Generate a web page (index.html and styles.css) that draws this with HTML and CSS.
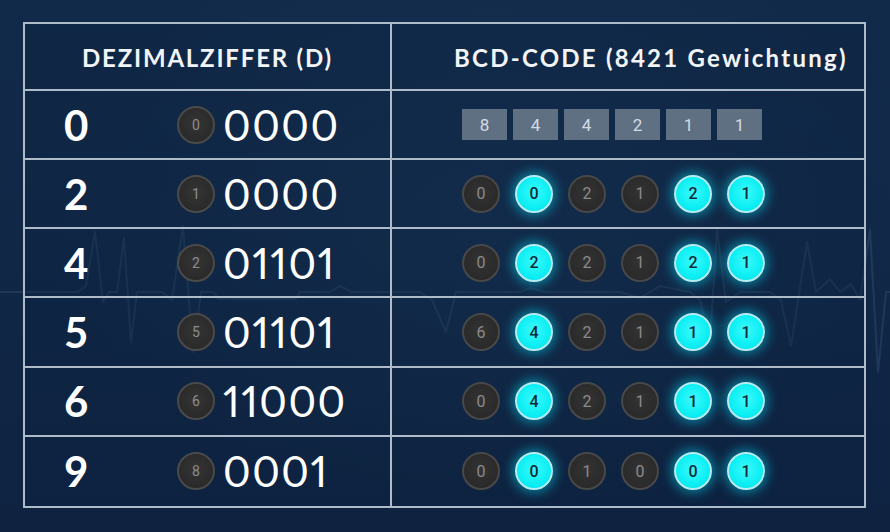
FILE: index.html
```html
<!DOCTYPE html>
<html lang="de">
<head>
<meta charset="utf-8">
<title>BCD-Code</title>
<link rel="stylesheet" href="styles.css">
</head>
<body>
<div class="page">
  <svg class="ecg" width="890" height="532" viewBox="0 0 890 532" aria-hidden="true">
    <polyline fill="none" stroke="#8fb4d6" stroke-width="2" stroke-linejoin="round"
      points="0,292 78,292 86,286 95,232 103,302 109,292 117,292 124,238 131,342 137,292 162,292 172,300 183,226 193,352 201,292 214,292 218,299 296,299 300,292 330,292 340,286 352,292 420,292 432,300 446,332 456,292 520,292 530,288 545,292 620,292 640,298 660,286 690,292 700,300 710,342 717,230 726,302 740,292 770,292 781,300 791,346 807,242 816,292 830,279 840,292 851,284 860,300 870,230 878,372 886,292 890,292"/>
  </svg>
  <div class="table">
    <div class="th th-left">DEZIMALZIFFER (D)</div>
    <div class="th th-right">BCD-CODE (8421 Gewichtung)</div>

    <div class="cell left"><span class="dec">0</span><span class="badge">0</span><span class="bin">0000</span></div>
    <div class="cell right">
      <span class="w">8</span><span class="w">4</span><span class="w">4</span><span class="w">2</span><span class="w">1</span><span class="w">1</span>
    </div>

    <div class="cell left"><span class="dec">2</span><span class="badge">1</span><span class="bin">0000</span></div>
    <div class="cell right bits">
      <span class="bit">0</span><span class="bit on">0</span><span class="bit">2</span><span class="bit">1</span><span class="bit on">2</span><span class="bit on">1</span>
    </div>

    <div class="cell left"><span class="dec">4</span><span class="badge">2</span><span class="bin">01101</span></div>
    <div class="cell right bits">
      <span class="bit">0</span><span class="bit on">2</span><span class="bit">2</span><span class="bit">1</span><span class="bit on">2</span><span class="bit on">1</span>
    </div>

    <div class="cell left"><span class="dec">5</span><span class="badge">5</span><span class="bin">01101</span></div>
    <div class="cell right bits">
      <span class="bit">6</span><span class="bit on">4</span><span class="bit">2</span><span class="bit">1</span><span class="bit on">1</span><span class="bit on">1</span>
    </div>

    <div class="cell left"><span class="dec">6</span><span class="badge">6</span><span class="bin">11000</span></div>
    <div class="cell right bits">
      <span class="bit">0</span><span class="bit on">4</span><span class="bit">2</span><span class="bit">1</span><span class="bit on">1</span><span class="bit on">1</span>
    </div>

    <div class="cell left last"><span class="dec">9</span><span class="badge">8</span><span class="bin">0001</span></div>
    <div class="cell right bits last">
      <span class="bit">0</span><span class="bit on">0</span><span class="bit">1</span><span class="bit">0</span><span class="bit on">0</span><span class="bit on">1</span>
    </div>
  </div>
</div>
</body>
</html>
```

FILE: styles.css
```css
* { box-sizing: border-box; }

html, body {
  margin: 0;
  padding: 0;
}

body {
  width: 890px;
  height: 532px;
  overflow: hidden;
  background: #112847;
  font-family: "Lato", "Open Sans", sans-serif;
  color: #f2f5f8;
}

.page {
  position: relative;
  width: 890px;
  height: 532px;
  padding: 22px 0 0 23px;
  background:
    radial-gradient(ellipse at 55% 40%, rgba(28, 58, 92, 0.5), rgba(0, 0, 0, 0) 65%),
    linear-gradient(180deg, #122a4a 0%, #102645 60%, #0f2341 100%);
}

.ecg {
  position: absolute;
  left: 0;
  top: 0;
  opacity: 0.13;
  z-index: 0;
}

.table {
  position: relative;
  z-index: 1;
  width: 843px;
  height: 486px;
  border: 2px solid #aebbc9;
  display: grid;
  grid-template-columns: 367px 1fr;
  grid-template-rows: 67px repeat(6, 1fr);
  background: rgba(12, 34, 64, 0.35);
}

.th,
.cell {
  border-bottom: 2px solid #aebbc9;
  display: flex;
  align-items: center;
}

.th-left,
.left {
  border-right: 2px solid #aebbc9;
}

.cell.last {
  border-bottom: none;
}

.th {
  font-weight: 700;
  font-size: 24px;
  letter-spacing: 1.8px;
  color: #f2f5f8;
}

.th-left {
  justify-content: center;
  padding-top: 2px;
}

.th-right {
  padding-left: 62px;
  padding-top: 2px;
  letter-spacing: 2.25px;
}

.left {
  padding-left: 39px;
}

.dec {
  width: 113px;
  font-weight: 700;
  font-size: 42px;
  line-height: 1;
  color: #ffffff;
}

.badge {
  width: 38px;
  height: 38px;
  border-radius: 50%;
  background: radial-gradient(circle at 50% 45%, #353535, #2a2a2a 70%);
  border: 2px solid #4a4a4a;
  display: flex;
  align-items: center;
  justify-content: center;
  font-family: "Roboto", sans-serif;
  font-size: 14px;
  color: #8e8e8e;
  flex: none;
}

.bin {
  margin-left: 8px;
  font-weight: 400;
  font-size: 42px;
  letter-spacing: 1.5px;
  line-height: 1;
  color: #ffffff;
  font-variant-numeric: proportional-nums;
}

.right {
  padding-left: 70px;
  gap: 6px;
}

.w {
  width: 45px;
  height: 31px;
  background: #5f7083;
  color: #d3dbe3;
  font-family: "Roboto", sans-serif;
  font-size: 17px;
  display: flex;
  align-items: center;
  justify-content: center;
}

.bits {
  gap: 15px;
}

.bit {
  width: 38px;
  height: 38px;
  border-radius: 50%;
  flex: none;
  display: flex;
  align-items: center;
  justify-content: center;
  font-family: "Roboto", sans-serif;
  font-size: 16px;
  background: radial-gradient(circle at 50% 45%, #333333, #2a2a2a 70%);
  border: 2px solid #484848;
  color: #8b8b8b;
}

.bit.on {
  background: radial-gradient(circle at 50% 45%, #3ff8fb 0%, #0ff0f4 55%, #00dbe6 100%);
  border: 2px solid #b4ecf2;
  color: #0c2c3a;
  font-weight: 500;
  box-shadow: 0 0 11px 3px rgba(0, 214, 240, 0.5);
}
```
